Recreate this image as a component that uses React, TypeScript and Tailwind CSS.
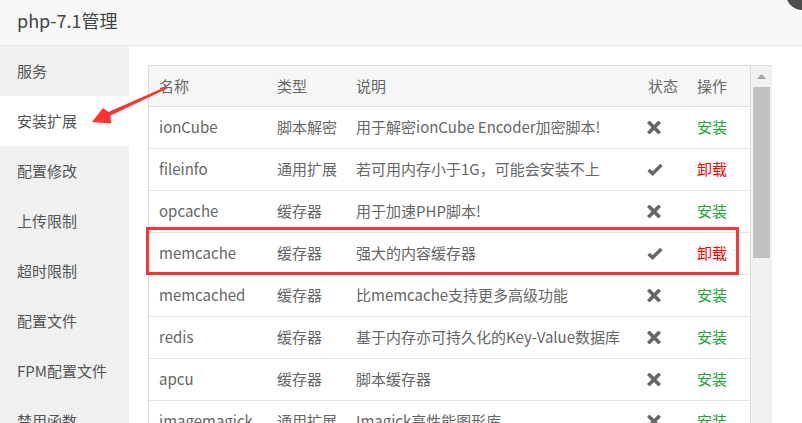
import React from "react";

type Row = { name: string; type: string; desc: string; installed: boolean };

const rows: Row[] = [
  { name: "ionCube", type: "脚本解密", desc: "用于解密ionCube Encoder加密脚本!", installed: false },
  { name: "fileinfo", type: "通用扩展", desc: "若可用内存小于1G，可能会安装不上", installed: true },
  { name: "opcache", type: "缓存器", desc: "用于加速PHP脚本!", installed: false },
  { name: "memcache", type: "缓存器", desc: "强大的内容缓存器", installed: true },
  { name: "memcached", type: "缓存器", desc: "比memcache支持更多高级功能", installed: false },
  { name: "redis", type: "缓存器", desc: "基于内存亦可持久化的Key-Value数据库", installed: false },
  { name: "apcu", type: "缓存器", desc: "脚本缓存器", installed: false },
  { name: "imagemagick", type: "通用扩展", desc: "Imagick高性能图形库", installed: false },
];

const menu = ["服务", "安装扩展", "配置修改", "上传限制", "超时限制", "配置文件", "FPM配置文件", "禁用函数"];

function XIcon() {
  return (
    <svg width="14" height="13" viewBox="0 0 14 13">
      <path d="M2.5 2 L11.5 11 M11.5 2 L2.5 11" stroke="#666" strokeWidth="3.6" strokeLinecap="square" />
    </svg>
  );
}

function CheckIcon() {
  return (
    <svg width="16" height="13" viewBox="0 0 16 13">
      <path d="M1.6 7 L5.6 10.6 L14.4 2" stroke="#666" strokeWidth="3.4" fill="none" strokeLinecap="butt" strokeLinejoin="miter" />
    </svg>
  );
}

export default function App() {
  return (
    <div
      className="relative h-[423px] w-[802px] overflow-hidden bg-white"
      style={{ fontFamily: '"Noto Sans CJK SC", "Open Sans", sans-serif' }}
    >
      {/* header */}
      <div className="flex h-[46px] items-start border-b border-[#e8e8e8] bg-[#f8f8f8] pl-[17px]">
        <span className="pt-[7px] text-[18px] leading-[26px] text-[#444]">php-7.1管理</span>
      </div>

      <div className="flex">
        {/* sidebar */}
        <div className="flex w-[129px] shrink-0 flex-col bg-[#f0f0f0]">
          {menu.map((m, i) => (
            <div
              key={m}
              className={
                "flex h-[50px] shrink-0 items-center pl-[17px] text-[15px] text-[#555] " +
                (i === 1 ? "bg-white" : "")
              }
            >
              {m}
            </div>
          ))}
        </div>

        {/* content */}
        <div className="flex flex-1 pl-[19px] pt-[19px]">
          <div className="flex h-[400px] w-[624px] border-t border-[#ddd]">
            <div className="w-[603px] border-x border-[#ddd] text-[15px] text-[#666]">
              <div className="flex h-[41px] items-center border-b border-[#ddd] bg-[#f6f6f6]">
                <div className="w-[118px] pl-[10px]">名称</div>
                <div className="w-[79px] pl-[10px]">类型</div>
                <div className="w-[292px] pl-[10px]">说明</div>
                <div className="w-[49px] pl-[10px]">状态</div>
                <div className="pl-[10px]">操作</div>
              </div>
              {rows.map((r) => (
                <div key={r.name} className="flex h-[42px] items-center border-b border-[#e4e4e4]">
                  <div className="w-[118px] pl-[10px]">{r.name}</div>
                  <div className="w-[79px] pl-[10px]">{r.type}</div>
                  <div className="w-[292px] whitespace-nowrap pl-[10px]">{r.desc}</div>
                  <div className="flex w-[49px] items-center pl-[9px]">
                    {r.installed ? <CheckIcon /> : <XIcon />}
                  </div>
                  <div className={"pl-[10px] " + (r.installed ? "text-[#ff0000]" : "text-[#20a53a]")}>
                    {r.installed ? "卸载" : "安装"}
                  </div>
                </div>
              ))}
            </div>
            {/* scrollbar */}
            <div className="flex w-[21px] flex-col items-center bg-[#f1f1f1]">
              <div className="flex h-[21px] w-full items-center justify-center">
                <svg width="9" height="5" viewBox="0 0 9 5">
                  <polygon points="4.5,0 9,5 0,5" fill="#a3a3a3" />
                </svg>
              </div>
              <div className="h-[171px] w-[17px] bg-[#c1c1c1]" />
            </div>
          </div>
        </div>
      </div>

      {/* red highlight box */}
      <div className="absolute left-[146px] top-[227px] h-[48px] w-[593px] border-[3px] border-[#f33]" />

      {/* red arrow */}
      <svg className="absolute left-0 top-0" width="802" height="423" viewBox="0 0 802 423">
        <polygon
          points="92,122 103,108 108.5,112 166.5,86.5 167.5,88.5 110.5,115.5 111,123.5"
          fill="#f33"
        />
      </svg>

      {/* close button */}
      <div className="absolute right-[-18px] top-[-24px] h-[36px] w-[36px] rounded-full border-2 border-white bg-[#4d4d4d]" />
    </div>
  );
}
